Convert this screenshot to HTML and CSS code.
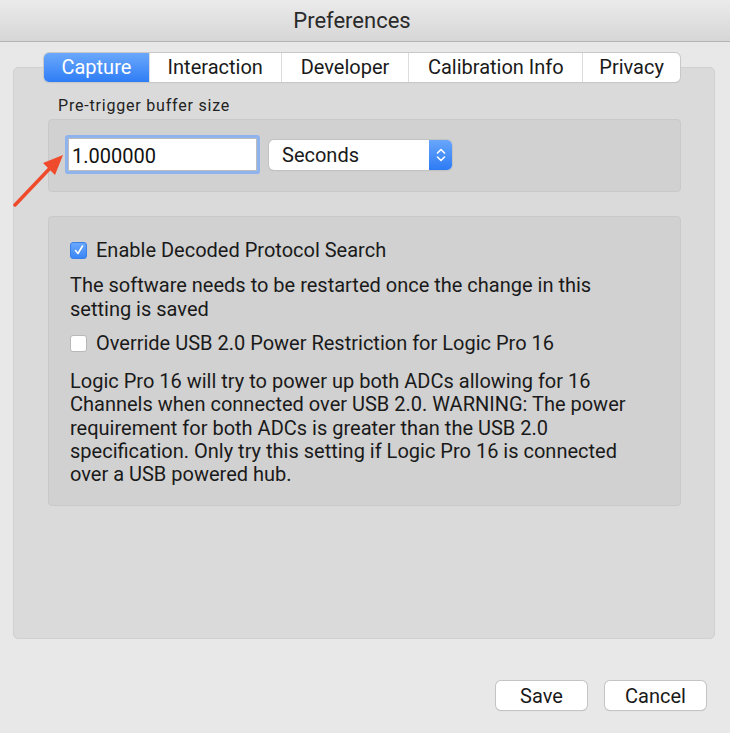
FILE: index.html
```html
<!DOCTYPE html>
<html lang="en">
<head>
  <meta charset="UTF-8" />
  <title>Preferences</title>
  <link rel="stylesheet" href="styles.css">
</head>
<body>
  <div class="titlebar">Preferences</div>

  <div class="content">
    <div class="tabs">
      <span class="tab active">Capture</span>
      <span class="tab">Interaction</span>
      <span class="tab">Developer</span>
      <span class="tab">Calibration Info</span>
      <span class="tab">Privacy</span>
    </div>

    <div class="panel">
      <div class="group-label">Pre-trigger buffer size</div>
      <div class="group buffer">
        <input type="text" class="num" value="1.000000" />
        <div class="select">
          <span>Seconds</span>
          <span class="stepper">
            <svg width="12" height="20" viewBox="0 0 12 20">
              <path d="M2.5 8 L6 4.5 L9.5 8 M2.5 12 L6 15.5 L9.5 12" fill="none" stroke="#fff" stroke-width="1.6" stroke-linecap="round" stroke-linejoin="round"/>
            </svg>
          </span>
        </div>
        <svg class="arrow" width="60" height="60" viewBox="0 0 60 60">
          <path d="M2 58 L40 18" stroke="#ef4a2c" stroke-width="3.5" stroke-linecap="round"/>
          <path d="M50 8 L30 16 L42 28 Z" fill="#ef4a2c"/>
        </svg>
      </div>

      <div class="group options">
        <label class="check">
          <span class="box checked">
            <svg width="12" height="12" viewBox="0 0 12 12">
              <path d="M2.5 6.5 L5 9.5 L9.5 2" fill="none" stroke="#fff" stroke-width="1.6" stroke-linecap="round" stroke-linejoin="round"/>
            </svg>
          </span>
          Enable Decoded Protocol Search
        </label>
        <p>The software needs to be restarted once the change in this setting is saved</p>
        <label class="check">
          <span class="box"></span>
          Override USB 2.0 Power Restriction for Logic Pro 16
        </label>
        <p class="warning">Logic Pro 16 will try to power up both ADCs allowing for 16 Channels when connected over USB 2.0. WARNING: The power requirement for both ADCs is greater than the USB 2.0 specification. Only try this setting if Logic Pro 16 is connected over a USB powered hub.</p>
      </div>
    </div>

    <div class="buttons">
      <button>Save</button>
      <button class="cancel">Cancel</button>
    </div>
  </div>
</body>
</html>
```
FILE: styles.css
```css
body {
  margin: 0;
  width: 730px;
  height: 733px;
  background: #e8e8e8;
  font-family: Roboto, "Liberation Sans", sans-serif;
  color: #1a1a1a;
  overflow: hidden;
}

.titlebar {
  height: 41px;
  line-height: 41px;
  text-align: center;
  font-size: 22px;
  color: #2a2a2a;
  padding-right: 26px;
  background: linear-gradient(#ebebeb, #d6d6d6);
  border-bottom: 1px solid #b4b4b4;
}

.content {
  padding: 11px 15px 0 13px;
  position: relative;
}

.tabs {
  display: flex;
  margin-left: 31px;
  width: 636px;
  height: 29px;
  position: relative;
  z-index: 1;
  background: #fff;
  border-radius: 5px;
  box-shadow: 0 0 0 1px #c8c8c8, 0 1px 1px rgba(0,0,0,0.15);
}

.tab {
  font-size: 20px;
  line-height: 29px;
  text-align: center;
  border-left: 1px solid #dcdcdc;
  color: #1a1a1a;
}

.tab:nth-child(1) { width: 105px; border-left: none; }
.tab:nth-child(2) { width: 131px; }
.tab:nth-child(3) { width: 127px; }
.tab:nth-child(4) { width: 173px; }
.tab:nth-child(5) { width: 97px; }

.tab.active {
  background: linear-gradient(#6aa8fb, #2f7df6);
  color: #fff;
  border-radius: 5px 0 0 5px;
}

.panel {
  margin-top: -15px;
  height: 572px;
  background: #dadada;
  border: 1px solid #d0d0d0;
  border-radius: 5px;
  padding: 28px 33px 0 34px;
  box-sizing: border-box;
}

.group-label {
  font-size: 16px;
  letter-spacing: 0.8px;
  line-height: 20px;
  color: #222;
  margin: 0 0 3px 10px;
}

.group {
  background: #d1d1d1;
  border: 1px solid #c9c9c9;
  border-radius: 4px;
}

.buffer {
  height: 73px;
  box-sizing: border-box;
  display: flex;
  align-items: center;
  gap: 12px;
  padding: 0 0 2px 19px;
  position: relative;
}

.num {
  width: 189px;
  height: 33px;
  box-sizing: border-box;
  border: 1px solid #bcbcbc;
  font-family: Roboto, "Liberation Sans", sans-serif;
  font-size: 20px;
  padding: 2px 3px 0;
  color: #111;
  outline: none;
  box-shadow: 0 0 0 3px #8fb3ec;
  border-radius: 1px;
}

.select {
  width: 183px;
  height: 30px;
  box-sizing: border-box;
  background: #fff;
  border-radius: 5px;
  box-shadow: 0 0 0 1px #c2c2c2, 0 1px 1px rgba(0,0,0,0.15);
  display: flex;
  align-items: center;
  justify-content: space-between;
  font-size: 20px;
  padding-left: 13px;
  overflow: hidden;
}

.stepper {
  width: 23px;
  height: 30px;
  background: linear-gradient(#68a6fb, #2d7bf5);
  display: flex;
  align-items: center;
  justify-content: center;
}

.arrow {
  position: absolute;
  left: -36px;
  top: 27px;
}

.options {
  margin-top: 24px;
  height: 290px;
  box-sizing: border-box;
  padding: 21px 35px 0 21px;
}

.check {
  display: flex;
  align-items: center;
  gap: 9px;
  font-size: 20px;
  line-height: 24px;
}

.box {
  width: 17px;
  height: 17px;
  box-sizing: border-box;
  background: #fff;
  border: 1px solid #b8b8b8;
  border-radius: 3px;
  display: flex;
  align-items: center;
  justify-content: center;
}

.box.checked {
  background: linear-gradient(#6aa8fb, #3a86f7);
  border-color: #3a7fe8;
}

.options p {
  font-size: 20px;
  line-height: 23.5px;
  margin: 12px 0 10px;
}

.options p.warning {
  margin-top: 15px;
  line-height: 23.3px;
}

.buttons {
  display: flex;
  justify-content: flex-end;
  gap: 18px;
  margin-top: 42px;
  padding-right: 9px;
}

.buttons button {
  width: 91px;
  height: 29px;
  background: #fff;
  border: none;
  border-radius: 5px;
  box-shadow: 0 0 0 1px #c4c4c4, 0 1px 1px rgba(0,0,0,0.18);
  font-family: Roboto, "Liberation Sans", sans-serif;
  font-size: 20px;
  color: #1a1a1a;
}

.buttons .cancel {
  width: 101px;
}
```
